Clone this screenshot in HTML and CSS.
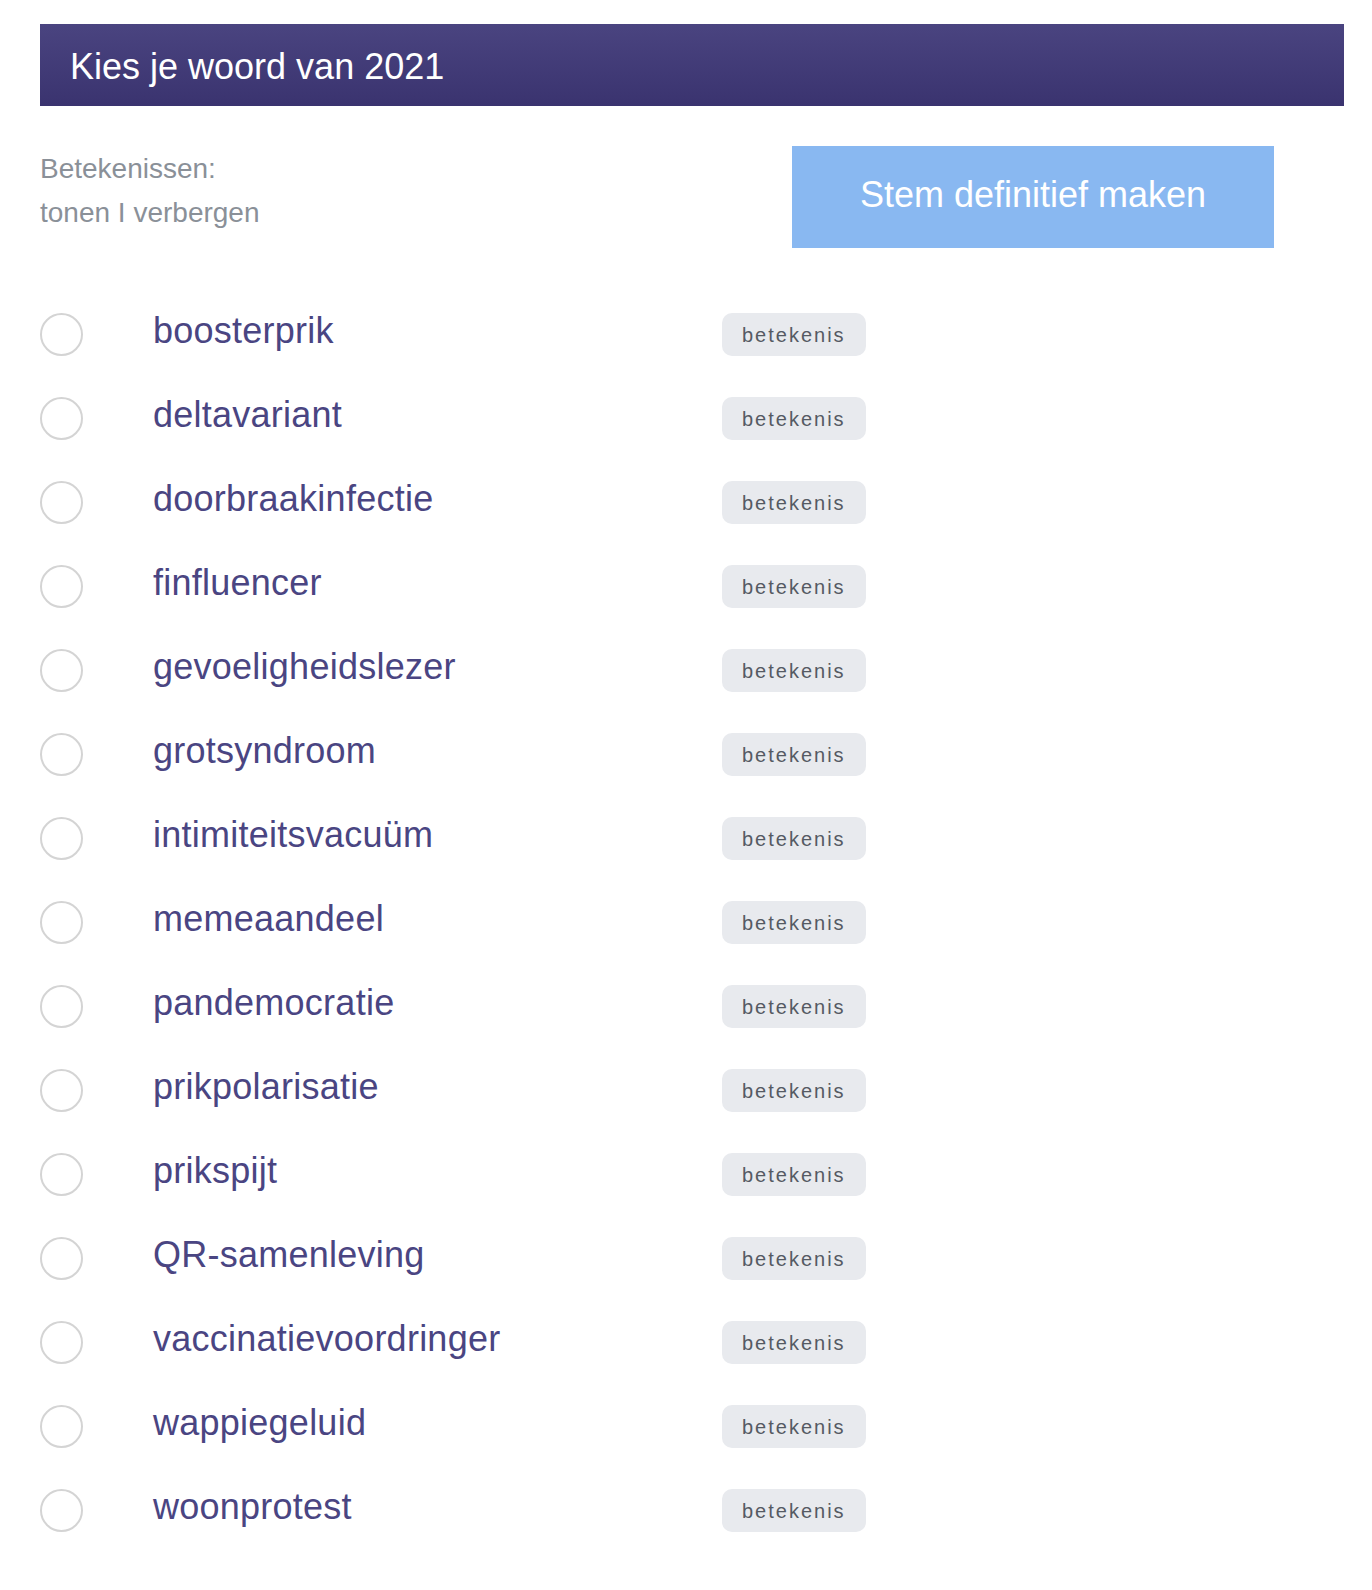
FILE: index.html
```html
<!DOCTYPE html>
<html lang="nl">
<head>
<meta charset="utf-8">
<title>Kies je woord van 2021</title>
<link rel="stylesheet" href="styles.css">
</head>
<body>
<div class="page">
  <header class="header">
    <h1 class="title">Kies je woord van 2021</h1>
  </header>

  <div class="controls">
    <div class="meanings">
      <div class="meanings-label">Betekenissen:</div>
      <div class="meanings-links"><span>tonen</span> I <span>verbergen</span></div>
    </div>
    <button class="submit" type="button">Stem definitief maken</button>
  </div>

  <ul class="words">
    <li class="row"><span class="radio"></span><span class="word">boosterprik</span><span class="pill">betekenis</span></li>
    <li class="row"><span class="radio"></span><span class="word">deltavariant</span><span class="pill">betekenis</span></li>
    <li class="row"><span class="radio"></span><span class="word">doorbraakinfectie</span><span class="pill">betekenis</span></li>
    <li class="row"><span class="radio"></span><span class="word">finfluencer</span><span class="pill">betekenis</span></li>
    <li class="row"><span class="radio"></span><span class="word">gevoeligheidslezer</span><span class="pill">betekenis</span></li>
    <li class="row"><span class="radio"></span><span class="word">grotsyndroom</span><span class="pill">betekenis</span></li>
    <li class="row"><span class="radio"></span><span class="word">intimiteitsvacuüm</span><span class="pill">betekenis</span></li>
    <li class="row"><span class="radio"></span><span class="word">memeaandeel</span><span class="pill">betekenis</span></li>
    <li class="row"><span class="radio"></span><span class="word">pandemocratie</span><span class="pill">betekenis</span></li>
    <li class="row"><span class="radio"></span><span class="word">prikpolarisatie</span><span class="pill">betekenis</span></li>
    <li class="row"><span class="radio"></span><span class="word">prikspijt</span><span class="pill">betekenis</span></li>
    <li class="row"><span class="radio"></span><span class="word">QR-samenleving</span><span class="pill">betekenis</span></li>
    <li class="row"><span class="radio"></span><span class="word">vaccinatievoordringer</span><span class="pill">betekenis</span></li>
    <li class="row"><span class="radio"></span><span class="word">wappiegeluid</span><span class="pill">betekenis</span></li>
    <li class="row"><span class="radio"></span><span class="word">woonprotest</span><span class="pill">betekenis</span></li>
  </ul>
</div>
</body>
</html>
```

FILE: styles.css
```css
* {
  box-sizing: border-box;
}

html, body {
  margin: 0;
  padding: 0;
  background: #ffffff;
}

body {
  font-family: "Liberation Sans", Arial, Helvetica, sans-serif;
}

.page {
  padding: 24px 28px 0 40px;
}

.header {
  height: 82px;
  background: linear-gradient(to bottom, #4a4480 0%, #3a336f 100%);
  padding: 3px 0 0 30px;
  display: flex;
  align-items: center;
}

.title {
  margin: 0;
  font-size: 36px;
  font-weight: normal;
  color: #ffffff;
  line-height: 44px;
}

.controls {
  margin-top: 40px;
  display: flex;
  align-items: flex-start;
}

.meanings {
  width: 752px;
  padding-top: 1px;
  font-size: 28px;
  line-height: 44px;
  color: #8a9098;
}

.submit {
  width: 482px;
  height: 102px;
  border: none;
  background: #89b8f1;
  color: #ffffff;
  font-family: "Liberation Sans", Arial, Helvetica, sans-serif;
  font-size: 36px;
  line-height: 44px;
  padding: 0 0 4px 0;
  cursor: pointer;
}

.words {
  list-style: none;
  margin: 44px 0 0 0;
  padding: 0;
}

.row {
  height: 84px;
  display: grid;
  grid-template-columns: 113px 569px auto;
  align-items: center;
}

.radio {
  width: 43px;
  height: 43px;
  border-radius: 50%;
  border: 2px solid #d4d4d4;
  background: #ffffff;
}

.word {
  font-size: 36px;
  letter-spacing: 0.25px;
  color: #4a4582;
  margin-top: -6px;
}

.pill {
  justify-self: start;
  height: 43px;
  padding: 2px 20px 0 20px;
  border-radius: 10px;
  background: #e8eaee;
  color: #555a63;
  font-size: 20px;
  letter-spacing: 2px;
  display: flex;
  align-items: center;
}
```
